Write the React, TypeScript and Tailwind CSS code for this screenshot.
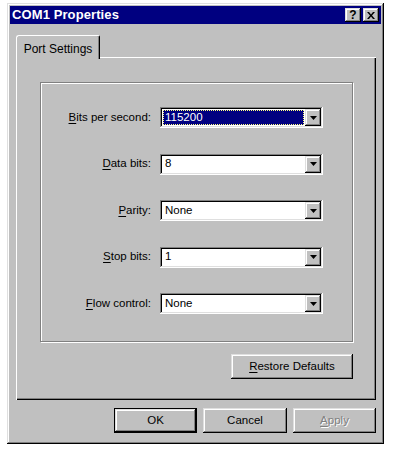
import React from 'react';

// Classic 3D bevels, done with inset shadows.
const raised =
  'shadow-[inset_-1px_-1px_#000,inset_1px_1px_#dfdfdf,inset_-2px_-2px_#808080,inset_2px_2px_#fff]';
const sunken =
  'shadow-[inset_-1px_-1px_#fff,inset_1px_1px_#808080,inset_-2px_-2px_#dfdfdf,inset_2px_2px_#000]';

const Mnemonic = ({ text, idx = 0 }: { text: string; idx?: number }) => (
  <>
    {text.slice(0, idx)}
    <span className="underline underline-offset-[2px]">{text[idx]}</span>
    {text.slice(idx + 1)}
  </>
);

const DropArrow = () => (
  <svg width="7" height="4" viewBox="0 0 7 4">
    <path d="M0 0h7L3.5 4z" fill="#000" />
  </svg>
);

interface ComboProps {
  label: string;
  value: string;
  selected?: boolean;
}

const ComboRow = ({ label, value, selected = false }: ComboProps) => (
  <div className="flex items-center h-[21px]">
    <div className="w-[111px] text-right pr-[1px]">
      <Mnemonic text={label} />
    </div>
    <div className={`ml-[8px] w-[163px] h-[21px] bg-white flex p-[2px] ${sunken}`}>
      <div className="flex-1 flex items-center pl-[1px] pr-[1px]">
        {selected ? (
          <div className="w-full h-[15px] bg-[#000080] text-white outline outline-1 outline-dotted outline-[#ffff80] -outline-offset-1 flex items-center pl-[2px]">
            {value}
          </div>
        ) : (
          <span className="pl-[2px]">{value}</span>
        )}
      </div>
      <div className={`w-[16px] h-full bg-[#c0c0c0] flex items-center justify-center ${raised}`}>
        <DropArrow />
      </div>
    </div>
  </div>
);

const Button = ({
  children,
  isDefault = false,
  disabled = false,
  className = '',
}: {
  children: React.ReactNode;
  isDefault?: boolean;
  disabled?: boolean;
  className?: string;
}) => (
  <div
    className={`h-[25px] bg-[#c0c0c0] flex items-center justify-center ${
      isDefault ? 'border border-black' : ''
    } ${className}`}
  >
    <div
      className={`w-full h-full flex items-center justify-center ${raised} ${
        disabled ? 'text-[#808080] [text-shadow:1px_1px_0_#fff]' : ''
      }`}
    >
      {children}
    </div>
  </div>
);

export default function App() {
  return (
    <div className="w-[397px] h-[453px] bg-white pt-[3px] pl-[7px] font-['Liberation_Sans',Arial,sans-serif] text-[11.5px] text-black">
      {/* WINDOW */}
      <div className={`w-[377px] h-[441px] bg-[#c0c0c0] p-[3px] flex flex-col ${raised}`}>
        {/* TITLE BAR */}
        <div className="h-[18px] bg-[#000080] flex items-center pl-[2px] pr-[2px]">
          <span className="text-white font-bold text-[13px] tracking-[0.1px] flex-1">
            COM1 Properties
          </span>
          <div className="flex gap-[2px]">
            <div className={`w-[16px] h-[14px] bg-[#c0c0c0] flex items-center justify-center font-bold text-[12px] leading-none ${raised}`}>
              ?
            </div>
            <div className={`w-[16px] h-[14px] bg-[#c0c0c0] flex items-center justify-center ${raised}`}>
              <svg width="8" height="7" viewBox="0 0 8 7">
                <path d="M0 0h2l2 2.5L6 0h2L5 3.5 8 7H6L4 4.5 2 7H0l3-3.5z" fill="#000" />
              </svg>
            </div>
          </div>
        </div>

        {/* TABS */}
        <div className="pl-[6px] pt-[11px]">
          <div className="flex">
            <div className="relative z-10 h-[24px] -mb-[2px] w-[84px] bg-[#c0c0c0] border-l border-t border-white rounded-tl-[3px] rounded-tr-[2px] border-r border-r-black shadow-[inset_-1px_0_#808080] flex items-start justify-center pt-[4px] text-[12px]">
              Port Settings
            </div>
          </div>

          {/* TAB PANEL */}
          <div className="w-[360px] h-[343px] bg-[#c0c0c0] shadow-[inset_1px_1px_#fff,inset_-1px_-1px_#000,inset_-2px_-2px_#808080] pt-[25px] pl-[24px] flex flex-col">
            {/* GROUP BOX */}
            <div className="w-[313px] h-[260px] border border-[#808080] shadow-[1px_1px_#fff,inset_1px_1px_#fff] pt-[24px] flex flex-col gap-[25.5px]">
              <ComboRow label="Bits per second:" value="115200" selected />
              <ComboRow label="Data bits:" value="8" />
              <ComboRow label="Parity:" value="None" />
              <ComboRow label="Stop bits:" value="1" />
              <ComboRow label="Flow control:" value="None" />
            </div>
            <div className="w-[313px] flex justify-end mt-[12px]">
              <Button className="w-[122px]">
                <Mnemonic text="Restore Defaults" />
              </Button>
            </div>
          </div>
        </div>

        {/* DIALOG BUTTONS */}
        <div className="flex justify-end gap-[6px] mt-[8px] pr-[5px]">
          <Button isDefault className="w-[83px]">
            OK
          </Button>
          <Button className="w-[84px]">Cancel</Button>
          <Button disabled className="w-[83px]">
            <Mnemonic text="Apply" />
          </Button>
        </div>
      </div>
    </div>
  );
}
